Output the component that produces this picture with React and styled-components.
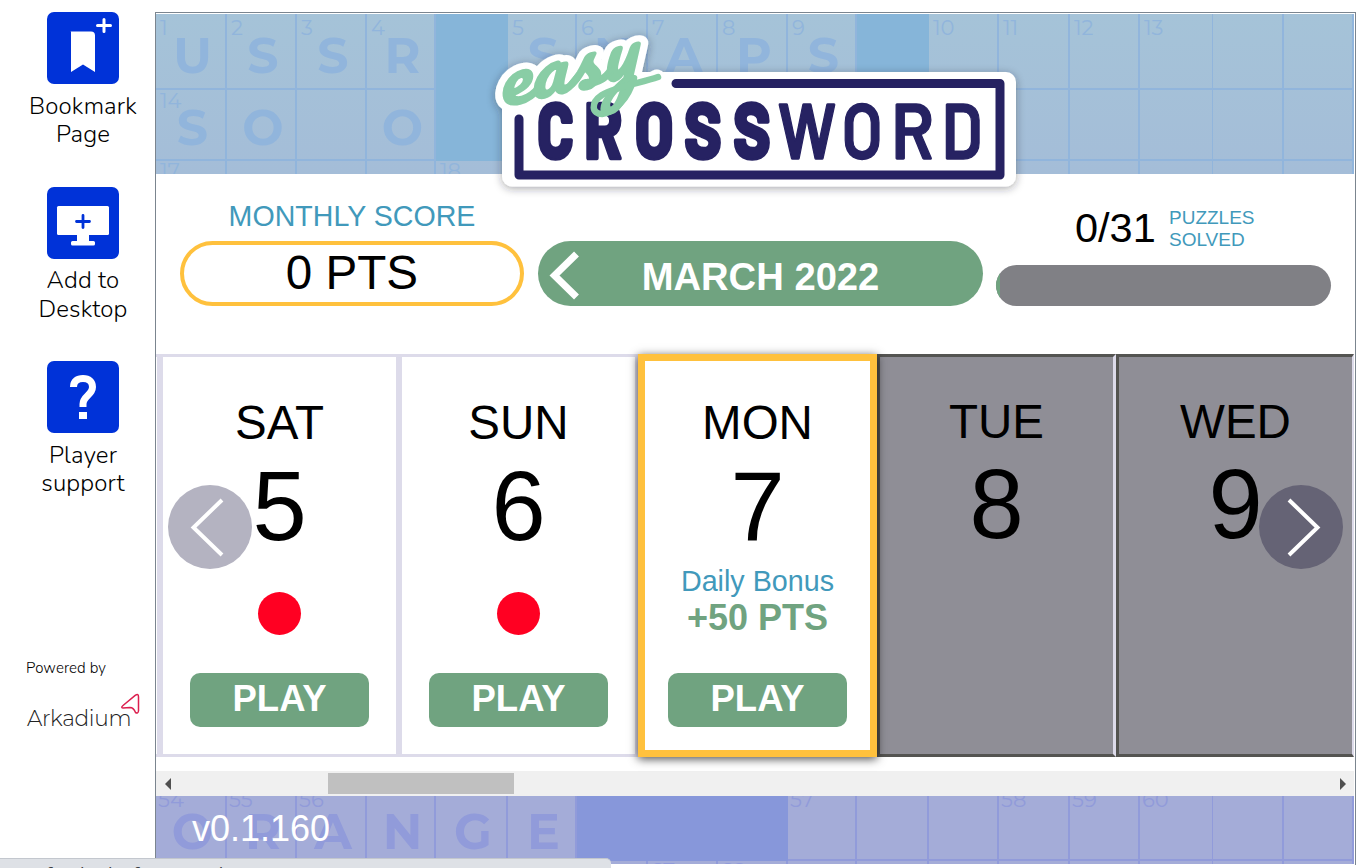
import React from "react";
import styled, { createGlobalStyle } from "styled-components";

const GlobalStyle = createGlobalStyle`
  * { box-sizing: border-box; }
  body { margin: 0; background: #fff; font-family: "Liberation Sans", Arial, sans-serif; color: #000; overflow: hidden; }
  button { font: inherit; border: 0; padding: 0; }
`;

const Page = styled.div`
  position: relative;
  display: grid;
  grid-template-columns: 155px 1201px;
  width: 1362px;
  height: 868px;
  overflow: hidden;
`;

const Sidebar = styled.aside`
  display: flex;
  flex-direction: column;
  padding-top: 12px;
  font-family: Nunito, "Nunito Sans", Lato, sans-serif;
`;

const SideLink = styled.a`
  display: flex;
  flex-direction: column;
  align-items: center;
  width: 166px;
  height: 174.5px;
`;

const SideIcon = styled.svg`
  display: block;
  width: 72px;
  height: 72px;
  border-radius: 7px;
  background: #0032d8;
`;

const SideLabel = styled.span`
  margin-top: 7.5px;
  font-size: 24px;
  font-weight: 350;
  line-height: 28.5px;
  letter-spacing: 0.15px;
  text-align: center;
  white-space: pre-line;
`;

const Powered = styled.div`
  margin: 122px 0 0 26px;
  font-size: 15px;
  font-weight: 350;
  line-height: 20px;
  letter-spacing: 0.1px;
`;

const Brand = styled.div`
  display: flex;
  align-items: flex-start;
  margin: 15px 0 0 27px;
  height: 40px;
`;

const BrandName = styled.span`
  padding-top: 11px;
  width: 94px;
  font-family: Montserrat, Nunito, Lato, sans-serif;
  font-size: 21.7px;
  line-height: 28px;
  font-weight: 300;
  color: #222;
  letter-spacing: -0.3px;
  white-space: nowrap;
`;

const Frame = styled.main`
  margin-top: 12px;
  height: 853px;
  border: 1px solid #7b858f;
  border-bottom: 0;
  padding: 1px 1px 0 0;
  overflow: hidden;
`;

const Hero = styled.header`
  position: relative;
  height: 160px;
`;

const Board = styled.div`
  display: grid;
  grid-template-columns: 71px 70px 70px 69px 72px 69px 71px 70px 70px 69px 72px 70px 71px 70px 73px 71px 70px;
  grid-template-rows: ${(p) => p.$rows};
  height: ${(p) => p.$height};
  overflow: hidden;
  color: ${(p) => p.$line};
  background: ${(p) => p.$fill};
`;

const Cell = styled.div`
  display: grid;
  min-width: 0;
  min-height: 0;
  overflow: hidden;
  border-right: ${(p) => (p.$thin ? "1px" : "2px")} solid currentColor;
  border-bottom: 2px solid currentColor;
  ${(p) => p.$block && `background: ${p.$block}; border-color: ${p.$block};`}
`;

const Clue = styled.span`
  grid-area: 1 / 1;
  place-self: start;
  margin: ${(p) => p.$top} 0 0 ${(p) => p.$left};
  font: 400 21px/21px Montserrat, Lato, sans-serif;
`;

const Letter = styled.span`
  grid-area: 1 / 1;
  place-self: center;
  padding: ${(p) => p.$drop} 0 0 4px;
  font: 700 49px/48px Montserrat, Inter, sans-serif;
`;

const LogoArt = styled.svg`
  position: absolute;
  left: 329px;
  top: 6px;
  width: 551px;
  height: 180px;
  z-index: 2;
`;

const Stats = styled.section`
  display: grid;
  grid-template-columns: 344px 445px 335px;
  column-gap: 14px;
  height: 180px;
  padding: 28px 0 0 24px;
`;

const ScoreBlock = styled.div`
  display: flex;
  flex-direction: column;
`;

const ScoreTitle = styled.div`
  height: 39px;
  font-size: 28.6px;
  line-height: 28px;
  text-align: center;
  color: #4199bb;
`;

const ScorePill = styled.div`
  height: 65px;
  border: 4px solid #ffc13d;
  border-radius: 33px;
  font-size: 47.6px;
  line-height: 56px;
  text-align: center;
`;

const MonthPill = styled.div`
  display: grid;
  grid-template-columns: 60px 1fr 60px;
  align-items: center;
  height: 65px;
  margin-top: 39px;
  border-radius: 33px;
  background: #70a380;
  color: #fff;
  font-size: 38.2px;
  font-weight: 700;
  line-height: 65px;
  text-align: center;
`;

const MonthText = styled.span`
  padding-top: 3px;
  white-space: nowrap;
`;

const SolvedBlock = styled.div`
  display: flex;
  flex-direction: column;
  margin-left: -1px;
`;

const SolvedRow = styled.div`
  display: flex;
  align-items: center;
  height: 63px;
  padding-left: 79px;
`;

const SolvedCount = styled.span`
  width: 94px;
  font-size: 41.5px;
  line-height: 42px;
  padding-bottom: 12px;
`;

const SolvedLabel = styled.span`
  font-size: 19px;
  line-height: 22px;
  padding-bottom: 9px;
  color: #4199bb;
  white-space: pre-line;
`;

const Progress = styled.div`
  width: 335px;
  height: 41px;
  border-radius: 21px;
  overflow: hidden;
  background: #808085;
`;

const ProgressFill = styled.div`
  width: 4px;
  height: 100%;
  background: #70a380;
`;

const Carousel = styled.section`
  position: relative;
  display: flex;
  height: 417px;
  overflow: visible;
`;

const Strip = styled.div`
  display: grid;
  grid-template-columns: 4px repeat(4, 239px) 238px;
  height: 403px;
`;

const EdgeCard = styled.div`
  border: 3px solid #dddbea;
  border-left: 0;
`;

const DayCard = styled.article`
  display: flex;
  flex-direction: column;
  align-items: center;
  min-width: 0;
  overflow: hidden;
  border: 3px solid #dddbea;
  padding-top: 36px;
  background: #fff;
  ${(p) =>
    p.$state === "today" &&
    `position: relative; z-index: 1; border: 7px solid #ffc13d; padding-top: 32px;
     box-shadow: 0 2px 9px rgba(0, 0, 0, 0.7);`}
  ${(p) =>
    p.$state === "locked" &&
    `background: #8f8e96; padding-top: 35px;
     border-color: #545451 #dddbea #545451 #545451;`}
  ${(p) => p.$last && "border-right-width: 2px;"}
`;

const DayName = styled.div`
  font-size: 47.5px;
  line-height: 59px;
  height: 60px;
`;

const DayNumber = styled.div`
  height: 111px;
  font-size: 97.5px;
  line-height: ${(p) => (p.$state === "locked" ? "106px" : "108px")};
`;

const Marker = styled.div`
  display: flex;
  flex-direction: column;
  align-items: center;
  height: 109px;
`;

const Dot = styled.span`
  width: 43px;
  height: 43px;
  margin-top: 28.4px;
  border-radius: 50%;
  background: #ff0022;
`;

const BonusLabel = styled.span`
  font-size: 28.7px;
  line-height: 34px;
  color: #4199bb;
`;

const BonusValue = styled.span`
  margin-top: 1px;
  font-size: 36px;
  line-height: 38px;
  font-weight: 700;
  color: #70a380;
`;

const PlayButton = styled.button`
  flex: none;
  width: 179px;
  height: 54px;
  padding-bottom: 2px;
  border-radius: 10px;
  background: #70a380;
  color: #fff;
  font: 700 36.5px/50px "Liberation Sans", Arial, sans-serif;
`;

const RoundArrow = styled.button`
  position: absolute;
  z-index: 2;
  top: 131px;
  ${(p) => (p.$side === "left" ? "left: 12px;" : "right: 11px;")}
  width: 84px;
  height: 84px;
  border-radius: 50%;
  background: ${(p) => (p.$side === "left" ? "#b4b3c1" : "#656375")};
`;

const Scroller = styled.div`
  display: flex;
  align-items: center;
  justify-content: space-between;
  height: 25px;
  padding: 0 8px 0 9px;
  background: #f0f0f0;
`;

const Thumb = styled.div`
  width: 186px;
  height: 21px;
  margin: 0 auto 0 157px;
  background: #c0c0c0;
`;

const Footer = styled.footer`
  position: relative;
`;

const Version = styled.span`
  position: absolute;
  left: 36px;
  top: 12px;
  color: #fff;
  font-size: 36px;
  line-height: 41px;
`;

const StatusBar = styled.div`
  position: absolute;
  z-index: 3;
  left: 0;
  bottom: 0;
  width: 611px;
  height: 10px;
  overflow: hidden;
  padding: 5px 0 0 46px;
  border-top: 1px solid #c3c7ce;
  border-top-right-radius: 5px;
  background: #dee1e6;
  color: #3c4043;
  font: 18px/20px "Open Sans", sans-serif;
  white-space: pre;
`;

const heroRows = [
  ["1U", "2S", "3S", "4R", "#", "5S", "6N", "7A", "8P", "9S", "#", "10", "11", "12", "13", "", ""],
  ["14S", "O", "", "O", "#", "", "", "", "", "", "", "", "", "", "", "", ""],
  ["17", "", "", "", "18", "", "", "", "", "", "", "", "", "", "", "", ""],
];

const footRows = [
  ["54O", "55R", "56A", "N", "G", "E", "#", "#", "#", "57", "", "", "58", "59", "60", "", ""],
  ["", "", "", "", "", "", "", "67", "68", "", "", "", "", "", "", "", ""],
];

function Cells({ rows, block, tops, left, drops }) {
  return rows.flatMap((row, r) =>
    row.map((text, c) => {
      const clue = text.replace(/[^0-9]/g, "");
      const letter = text.replace(/[^A-Z]/g, "");
      return (
        <Cell key={`${r}-${c}`} $block={text === "#" ? block : undefined} $thin={c === 14}>
          {clue && <Clue $top={tops[r]} $left={left}>{clue}</Clue>}
          {letter && <Letter $drop={drops[r]}>{letter}</Letter>}
        </Cell>
      );
    })
  );
}

const heavy = [["C", 555.5, 0.77], ["R", 603.5, 0.79], ["O", 654, 0.79], ["S", 703, 0.8], ["S", 752, 0.8]];
const light = [["W", 807, 0.85], ["O", 862, 0.84], ["R", 912.5, 0.89], ["D", 962, 0.84]];

const scriptText = {
  transform: "translate(500 108.5) rotate(-13.5)",
  fontFamily: "Pacifico, Damion, Yellowtail, 'Dancing Script', Caveat, Lato",
  fontWeight: 400,
  fontStyle: "italic",
  fontSize: 69,
  textLength: 143,
  lengthAdjust: "spacingAndGlyphs",
};

function Logo() {
  return (
    <LogoArt viewBox="485 20 551 180" role="img" aria-label="easy crossword">
      <defs>
        <filter id="lift" x="-10%" y="-20%" width="120%" height="150%">
          <feDropShadow dx="0" dy="2" stdDeviation="4" floodColor="#223" floodOpacity="0.4" />
        </filter>
      </defs>
      <g filter="url(#lift)">
        <rect x="502" y="72" width="514" height="114.5" rx="10" fill="#fff" />
        <g fill="#fff" stroke="#fff" strokeLinejoin="round" strokeLinecap="round">
          <text {...scriptText} strokeWidth="14">easy</text>
          <path d="M628 87Q646 85 657 78" strokeWidth="17" fill="none" />
        </g>
      </g>
      <path d="M519 119V175H1000V83.5H676" fill="none" stroke="#262262" strokeWidth="9" strokeLinecap="round" strokeLinejoin="round" />
      <g fill="#262262" stroke="#262262" fontFamily="Barlow, 'DIN Alternate', Roboto" textAnchor="middle">
        {heavy.map(([ch, x, s], i) => (
          <text key={i} transform={`translate(${x} 158.500) scale(${s} 1)`} fontSize="79" fontWeight="800" strokeWidth="2.6">{ch}</text>
        ))}
        {light.map(([ch, x, s], i) => (
          <text key={i} transform={`translate(${x} 158.500) scale(${s} 1)`} fontSize="79" fontWeight="600" strokeWidth="1.4">{ch}</text>
        ))}
      </g>
      <g fill="#89cda5" stroke="#89cda5" strokeLinecap="round">
        <text {...scriptText} strokeWidth="1.500">easy</text>
        <path d="M658 77C641 83 617 86 602 95C590 103 592 114 602 114C615 112 628 99 634 78" fill="none" strokeWidth="6.5" />
      </g>
    </LogoArt>
  );
}

const days = [
  { name: "SAT", number: 5, state: "open" },
  { name: "SUN", number: 6, state: "open" },
  { name: "MON", number: 7, state: "today" },
  { name: "TUE", number: 8, state: "locked" },
  { name: "WED", number: 9, state: "locked" },
];

function Day({ day, last }) {
  return (
    <DayCard $state={day.state} $last={last}>
      <DayName>{day.name}</DayName>
      <DayNumber $state={day.state}>{day.number}</DayNumber>
      {day.state !== "locked" && (
        <>
          <Marker>
            {day.state === "open" ? (
              <Dot />
            ) : (
              <>
                <BonusLabel>Daily Bonus</BonusLabel>
                <BonusValue>+50 PTS</BonusValue>
              </>
            )}
          </Marker>
          <PlayButton>PLAY</PlayButton>
        </>
      )}
    </DayCard>
  );
}

export default function App() {
  return (
    <>
      <GlobalStyle />
      <Page>
        <Sidebar>
          <SideLink>
            <SideIcon viewBox="0 0 72 72">
              <path d="M23.5 19.5H44a4 4 0 0 1 4 4V60L36 52.5 24 60V20z" fill="#fff" />
              <path d="M57 7.5V19.500M50.500 13.500H63.500" stroke="#fff" strokeWidth="3" strokeLinecap="round" />
            </SideIcon>
            <SideLabel>{"Bookmark\nPage"}</SideLabel>
          </SideLink>
          <SideLink>
            <SideIcon viewBox="0 0 72 72">
              <rect x="10" y="19" width="52" height="29" rx="1.500" fill="#fff" />
              <path d="M30 47H42V54H46.500a1.500 1.500 0 0 1 1.500 1.500V57a1.500 1.500 0 0 1-1.500 1.500H25.500A1.500 1.500 0 0 1 24 57V55.500A1.500 1.500 0 0 1 25.500 54H30z" fill="#fff" />
              <path d="M36 28.500V40.500M29.500 34.500H42.500" stroke="#0032d8" strokeWidth="2.800" strokeLinecap="round" />
            </SideIcon>
            <SideLabel>{"Add to\nDesktop"}</SideLabel>
          </SideLink>
          <SideLink>
            <SideIcon viewBox="0 0 72 72">
              <path d="M26.500 26C26.500 20 30.500 17.500 36 17.500C42 17.500 45.500 21 45.500 26C45.500 34 36 35 36 43V46" fill="none" stroke="#fff" strokeWidth="7" />
              <rect x="32" y="51" width="8" height="7" fill="#fff" />
            </SideIcon>
            <SideLabel>{"Player\nsupport"}</SideLabel>
          </SideLink>
          <Powered>Powered by</Powered>
          <Brand>
            <BrandName>Arkadium</BrandName>
            <svg width="20" height="24" viewBox="0 0 20 24">
              <path d="M2 12.500L14.500 2.200Q17.500 0 17.500 4V18Q17 21 14.500 19.500Q12.500 14.500 9 14.500L2 15Q-.5 14.500 2 12.500Z" fill="none" stroke="#dc1f4e" strokeWidth="1.500" strokeLinejoin="round" />
            </svg>
          </Brand>
        </Sidebar>

        <Frame>
          <Hero>
            <Board $rows="76px 71px 32px" $height="160px" $line="#91b5dc" $fill="linear-gradient(#a5c3d8, #a4bdd8)">
              <Cells rows={heroRows} block="#86b5d9" tops={["2.5px", "-0.5px", "-1px"]} left="4px" drops={["10px", "6px", "0"]} />
            </Board>
            <Logo />
          </Hero>

          <Stats>
            <ScoreBlock>
              <ScoreTitle>MONTHLY SCORE</ScoreTitle>
              <ScorePill>0 PTS</ScorePill>
            </ScoreBlock>
            <MonthPill>
              <svg width="60" height="65" viewBox="0 0 60 65">
                <path d="M38.500 11L16.500 32.500L38.500 54" fill="none" stroke="#fff" strokeWidth="7" />
              </svg>
              <MonthText>MARCH 2022</MonthText>
            </MonthPill>
            <SolvedBlock>
              <SolvedRow>
                <SolvedCount>0/31</SolvedCount>
                <SolvedLabel>{"PUZZLES\nSOLVED"}</SolvedLabel>
              </SolvedRow>
              <Progress>
                <ProgressFill />
              </Progress>
            </SolvedBlock>
          </Stats>

          <Carousel>
            <Strip>
              <EdgeCard />
              {days.map((day, i) => (
                <Day key={day.name} day={day} last={i === days.length - 1} />
              ))}
            </Strip>
            <RoundArrow $side="left" aria-label="Previous days">
              <svg width="84" height="84" viewBox="0 0 84 84">
                <path d="M54 15L25.500 42.500L54 70" fill="none" stroke="#fff" strokeWidth="4" />
              </svg>
            </RoundArrow>
            <RoundArrow $side="right" aria-label="Next days">
              <svg width="84" height="84" viewBox="0 0 84 84">
                <path d="M30 15L58.500 42.500L30 70" fill="none" stroke="#fff" strokeWidth="4" />
              </svg>
            </RoundArrow>
          </Carousel>

          <Scroller>
            <svg width="6" height="12" viewBox="0 0 6 12"><path d="M6 0V12L0 6z" fill="#505050" /></svg>
            <Thumb />
            <svg width="6" height="12" viewBox="0 0 6 12"><path d="M0 0V12L6 6z" fill="#505050" /></svg>
          </Scroller>

          <Footer>
            <Board $rows="65px 70px" $height="68px" $line="#919bda" $fill="#a4acd8">
              <Cells rows={footRows} block="#8797da" tops={["-7px", "-1px"]} left="2px" drops={["8px", "0"]} />
            </Board>
            <Version>v0.1.160</Version>
          </Footer>
        </Frame>

        <StatusBar>{"f      l     h   f                 l"}</StatusBar>
      </Page>
    </>
  );
}
